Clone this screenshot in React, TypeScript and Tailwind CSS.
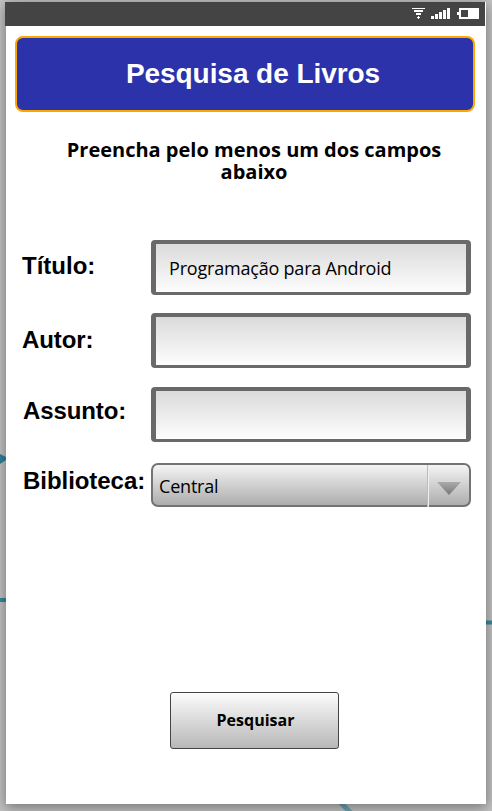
import React from "react";

const sans = "font-['Open_Sans','Noto_Sans',sans-serif]";

function StatusIcons() {
  return (
    <svg width="72" height="24" viewBox="0 0 72 24" shapeRendering="crispEdges" fill="#fff" aria-hidden="true">
      <rect x="0" y="6" width="13" height="1" />
      <rect x="2" y="8" width="9" height="2" />
      <rect x="4" y="11" width="5" height="2" />
      <rect x="6" y="14" width="1" height="3" />
      <rect x="5" y="15" width="3" height="1" />
      <rect x="19" y="14" width="3" height="3" />
      <rect x="23" y="12" width="3" height="5" />
      <rect x="27" y="10" width="3" height="7" />
      <rect x="31" y="8" width="3" height="9" />
      <rect x="35" y="6" width="3" height="11" />
      <path fillRule="evenodd" d="M47 6H67V17H47V13H45V10H47ZM49 8V15H56V8Z" />
    </svg>
  );
}

function Field({ label, value, labelClass }: { label: string; value?: string; labelClass: string }) {
  return (
    <div className="flex h-[55px] items-center">
      <div className={`w-[129px] shrink-0 text-[24px] leading-[28px] font-bold whitespace-nowrap ${labelClass}`}>{label}</div>
      <div
        className={`flex h-[55px] w-[320px] items-center rounded-[4px] border-x-[5px] border-t-[4px] border-b-[3px] border-[#696969] bg-gradient-to-b from-[#d8d8d8] to-white bg-origin-border pl-[13px] text-[18px] tracking-[-0.2px] ${sans}`}
      >
        <span className="whitespace-nowrap">{value}</span>
      </div>
    </div>
  );
}

export default function App() {
  return (
    <div className="relative h-[811px] w-[492px] overflow-hidden bg-[#c4c4c4] font-['Liberation_Sans',Arial,sans-serif] text-black">
      <svg className="absolute inset-0" width="492" height="811" fill="none" stroke="#3a8ba3" aria-hidden="true">
        <path d="M0 454L6 457V460L0 464Z" fill="#2e849d" stroke="none" />
        <path d="M0 600H6M486 622.5H492" strokeWidth="4" />
        <path d="M338 800L352 814" stroke="#6aa6b6" strokeWidth="5" />
      </svg>
      <main className="relative mt-[2px] ml-[6px] flex h-[802px] w-[480px] flex-col bg-white shadow-[0_3px_13px_1px_rgba(0,0,0,0.4)]">
        <header className="-ml-px flex h-[24px] w-[480px] shrink-0 justify-end bg-[#444444] pr-[1px]">
          <StatusIcons />
        </header>
        <h1 className="mt-[10px] ml-[9px] flex h-[76px] w-[460px] shrink-0 items-center justify-center rounded-[8px] border-2 border-[#ffa500] bg-[#2b32aa] pl-[16px] text-[28px] font-bold tracking-[-0.06px] whitespace-nowrap text-white">
          Pesquisa de Livros
        </h1>
        <p className={`mt-[27px] ml-[8px] h-[44px] w-[480px] shrink-0 text-center text-[20px] leading-[22px] font-bold ${sans}`}>
          Preencha pelo menos um dos campos
          <br />
          abaixo
        </p>
        <section className="mt-[57px] ml-[16px] flex shrink-0 flex-col">
          <div className="flex flex-col gap-[18px]">
            <Field label="Título:" value="Programação para Android" labelClass="pb-[3px]" />
            <Field label="Autor:" labelClass="pb-px tracking-[-0.1px]" />
          </div>
          <div className="mt-[19px]">
            <Field label="Assunto:" labelClass="pb-[7px] pl-px tracking-[-0.1px]" />
          </div>
          <div className="mt-[21px] flex h-[44px] items-center">
            <div className="w-[129px] shrink-0 pb-[9px] pl-px text-[24px] leading-[28px] font-bold tracking-[-0.05px] whitespace-nowrap">
              Biblioteca:
            </div>
            <div className="flex h-[44px] w-[320px] items-stretch rounded-[7px] border-2 border-[#747272] bg-gradient-to-b from-[#f8f8f8] to-[#aaaaaa] bg-origin-border">
              <span className={`flex grow items-center pt-[3px] pl-[6px] text-[18px] tracking-[-0.2px] ${sans}`}>Central</span>
              <span className="-mb-[2px] w-px bg-[#bcbcbc]" />
              <span className="-mb-[2px] w-px bg-[#eeeeee]" />
              <span className="flex w-[40px] items-center justify-center pt-[7px]">
                <svg width="24" height="13" viewBox="0 0 24 13" aria-hidden="true">
                  <defs>
                    <linearGradient id="arrow" x1="0" y1="0" x2="0" y2="1">
                      <stop stopColor="#ababab" />
                      <stop offset="1" stopColor="#777" />
                    </linearGradient>
                  </defs>
                  <path d="M0 0H24L12 13Z" fill="url(#arrow)" />
                </svg>
              </span>
            </div>
          </div>
        </section>
        <button
          className={`mt-[185px] ml-[164px] h-[57px] w-[169px] shrink-0 rounded-[3px] border border-[#444444] bg-gradient-to-b from-[#fcfcfc] to-[#b8b8b8] pl-[2px] pb-[2px] text-[16px] font-bold ${sans}`}
        >
          Pesquisar
        </button>
      </main>
    </div>
  );
}
